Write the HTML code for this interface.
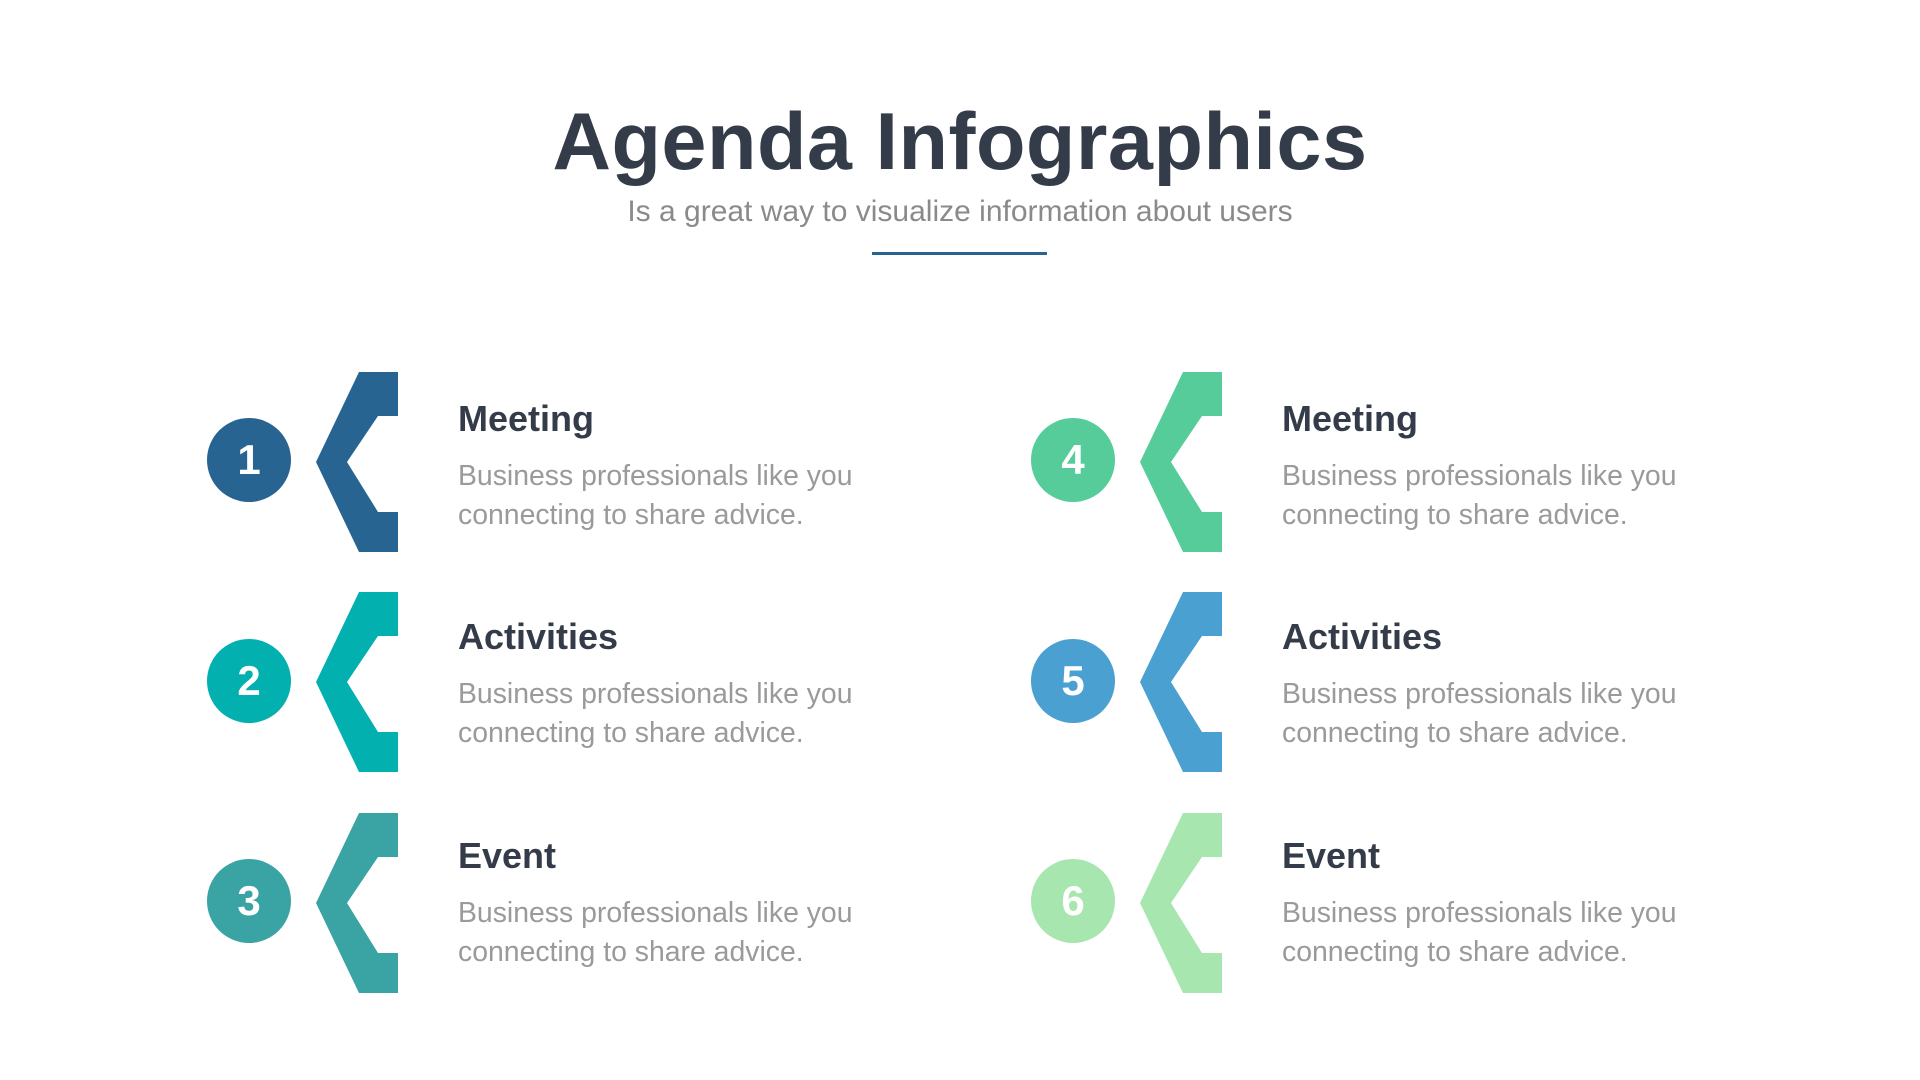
<!DOCTYPE html>
<html><head><meta charset="utf-8"><style>
body{margin:0;width:1920px;height:1080px;background:#fff;position:relative;overflow:hidden;font-family:"Liberation Sans",sans-serif}
.t{position:absolute;left:0;width:1920px;text-align:center}
.c{position:absolute;width:84px;height:84px;border-radius:50%;color:#fff;font-weight:bold;font-size:42px;line-height:84px;text-align:center}
.h{position:absolute;font-weight:bold;font-size:36px;color:#333c48;line-height:40px}
.b{position:absolute;font-size:28.4px;color:#9a9a9a;line-height:39px}
svg{position:absolute}
</style></head><body>
<div class="t" style="top:94px;font-size:81px;font-weight:bold;color:#333c48;line-height:96px;letter-spacing:0.5px">Agenda Infographics</div>
<div class="t" style="top:194px;font-size:30px;color:#8a8a8a;line-height:36px">Is a great way to visualize information about users</div>
<div style="position:absolute;left:872px;top:252px;width:175px;height:3px;background:#276492"></div>

<div class="c" style="left:207px;top:418px;background:#276492">1</div>
<svg style="left:316px;top:372px" width="82" height="180"><polygon points="82,0 43,0 0,90 43,180 82,180 82,140 62,140 31,90 62,44 82,44" fill="#276492"/></svg>
<div class="h" style="left:458px;top:399px">Meeting</div>
<div class="b" style="left:458px;top:457px">Business professionals like you<br>connecting to share advice.</div>

<div class="c" style="left:207px;top:639px;background:#02b0b0">2</div>
<svg style="left:316px;top:592px" width="82" height="180"><polygon points="82,0 43,0 0,90 43,180 82,180 82,140 62,140 31,90 62,44 82,44" fill="#02b0b0"/></svg>
<div class="h" style="left:458px;top:617px">Activities</div>
<div class="b" style="left:458px;top:675px">Business professionals like you<br>connecting to share advice.</div>

<div class="c" style="left:207px;top:859px;background:#3aa3a3">3</div>
<svg style="left:316px;top:813px" width="82" height="180"><polygon points="82,0 43,0 0,90 43,180 82,180 82,140 62,140 31,90 62,44 82,44" fill="#3aa3a3"/></svg>
<div class="h" style="left:458px;top:836px">Event</div>
<div class="b" style="left:458px;top:894px">Business professionals like you<br>connecting to share advice.</div>

<div class="c" style="left:1031px;top:418px;background:#55cc99">4</div>
<svg style="left:1140px;top:372px" width="82" height="180"><polygon points="82,0 43,0 0,90 43,180 82,180 82,140 62,140 31,90 62,44 82,44" fill="#55cc99"/></svg>
<div class="h" style="left:1282px;top:399px">Meeting</div>
<div class="b" style="left:1282px;top:457px">Business professionals like you<br>connecting to share advice.</div>

<div class="c" style="left:1031px;top:639px;background:#4aa0d0">5</div>
<svg style="left:1140px;top:592px" width="82" height="180"><polygon points="82,0 43,0 0,90 43,180 82,180 82,140 62,140 31,90 62,44 82,44" fill="#4aa0d0"/></svg>
<div class="h" style="left:1282px;top:617px">Activities</div>
<div class="b" style="left:1282px;top:675px">Business professionals like you<br>connecting to share advice.</div>

<div class="c" style="left:1031px;top:859px;background:#a8e6b0">6</div>
<svg style="left:1140px;top:813px" width="82" height="180"><polygon points="82,0 43,0 0,90 43,180 82,180 82,140 62,140 31,90 62,44 82,44" fill="#a8e6b0"/></svg>
<div class="h" style="left:1282px;top:836px">Event</div>
<div class="b" style="left:1282px;top:894px">Business professionals like you<br>connecting to share advice.</div>
</body></html>
